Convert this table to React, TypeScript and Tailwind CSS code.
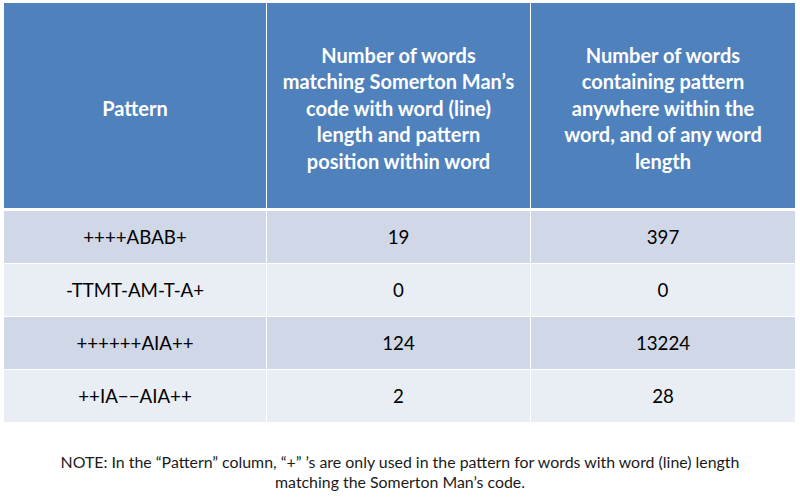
import React from "react";

const rows = [
  ["++++ABAB+", "19", "397"],
  ["-TTMT-AM-T-A+", "0", "0"],
  ["++++++AIA++", "124", "13224"],
  ["++IA\u2212\u2212AIA++", "2", "28"],
];

export default function App() {
  return (
    <div
      className="w-[800px] h-[498px] bg-white overflow-hidden pt-[3px] pl-[4px]"
      style={{ fontFamily: "Lato, 'Liberation Sans', sans-serif" }}
    >
      <div className="w-[791px] flex flex-col">
        <div className="grid grid-cols-[263px_264px_264px] h-[205px] bg-[#4f81bd] text-white font-bold text-[20px] leading-[26.5px] text-center">
          <div className="flex items-center justify-center border-r border-white pt-[5px]">Pattern</div>
          <div className="flex items-center justify-center border-r border-white pt-[5px] whitespace-nowrap">
            <div>
              Number of words
              <br />
              matching Somerton Man’s
              <br />
              code with word (line)
              <br />
              length and pattern
              <br />
              position within word
            </div>
          </div>
          <div className="flex items-center justify-center pt-[5px] whitespace-nowrap">
            <div>
              Number of words
              <br />
              containing pattern
              <br />
              anywhere within the
              <br />
              word, and of any word
              <br />
              length
            </div>
          </div>
        </div>
        <div className="h-[3px] bg-white" />
        {rows.map((r, i) => (
          <div
            key={i}
            className={`grid grid-cols-[263px_264px_264px] h-[53px] text-[18.7px] text-black text-center border-b border-white ${
              i % 2 === 0 ? "bg-[#d0d8e8]" : "bg-[#e9edf4]"
            }`}
          >
            <div className="flex items-center justify-center border-r border-white">{r[0]}</div>
            <div className="flex items-center justify-center border-r border-white">{r[1]}</div>
            <div className="flex items-center justify-center">{r[2]}</div>
          </div>
        ))}
      </div>
      <div className="w-[792px] mt-[29px] text-center text-[15.9px] leading-[20px] text-[#1a1a1a] whitespace-nowrap">
        NOTE: In the “Pattern” column, “+” ’s are only used in the pattern for words with word (line) length
        <br />
        matching the Somerton Man’s code.
      </div>
    </div>
  );
}
